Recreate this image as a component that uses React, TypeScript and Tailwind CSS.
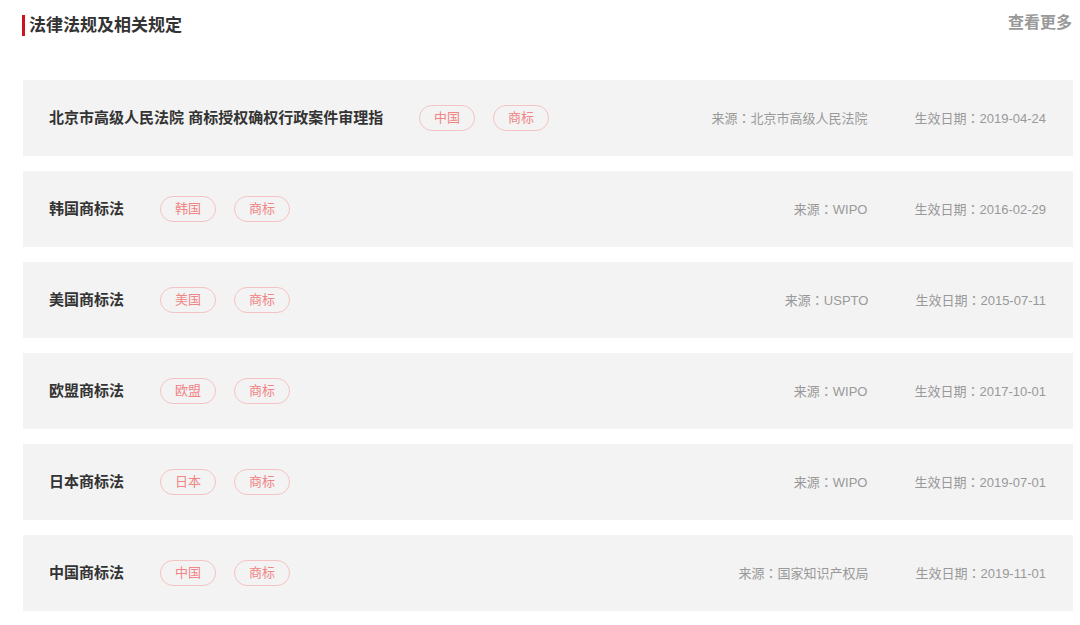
import React from "react";

const rows = [
  { title: "北京市高级人民法院 商标授权确权行政案件审理指", tags: ["中国", "商标"], source: "北京市高级人民法院", date: "2019-04-24", truncate: true },
  { title: "韩国商标法", tags: ["韩国", "商标"], source: "WIPO", date: "2016-02-29" },
  { title: "美国商标法", tags: ["美国", "商标"], source: "USPTO", date: "2015-07-11" },
  { title: "欧盟商标法", tags: ["欧盟", "商标"], source: "WIPO", date: "2017-10-01" },
  { title: "日本商标法", tags: ["日本", "商标"], source: "WIPO", date: "2019-07-01" },
  { title: "中国商标法", tags: ["中国", "商标"], source: "国家知识产权局", date: "2019-11-01" },
];

function Colon() {
  return <span className="font-['Noto_Sans_CJK_TC',sans-serif]">：</span>;
}

export default function App() {
  return (
    <div
      className="w-[1080px] h-[625px] bg-white overflow-hidden"
      style={{ fontFamily: '"Liberation Sans", "Noto Sans CJK SC", sans-serif' }}
    >
      <div className="flex items-center justify-between pl-[22px] pr-[8px] pt-[14px] h-[22px] box-content">
        <div className="flex items-center">
          <div className="w-[3px] h-[21px] bg-[#d0121b]" />
          <span className="ml-[4px] text-[17px] font-bold text-[#333] leading-none">法律法规及相关规定</span>
        </div>
        <span className="text-[16px] text-[#999] font-bold leading-none mt-[-4px]">查看更多</span>
      </div>
      <div className="flex flex-col gap-[15px] mt-[44px] ml-[23px] w-[1050px]">
        {rows.map((r, i) => (
          <div key={i} className="h-[76px] bg-[#f3f3f3] flex items-center pl-[26px] pr-[27px]">
            <span
              className={
                "text-[15px] font-bold text-[#333] whitespace-nowrap " +
                (r.truncate ? "w-[334px]" : "")
              }
            >
              {r.title}
            </span>
            <div className="flex gap-[18px] ml-[36px]">
              {r.tags.map((t, j) => (
                <span
                  key={j}
                  className="w-[56px] h-[26px] rounded-full border border-[#f5c3c3] text-[#f08585] text-[13px] flex items-center justify-center"
                >
                  {t}
                </span>
              ))}
            </div>
            <div className="flex-1" />
            <span className="text-[13px] text-[#999] whitespace-nowrap">
              来源<Colon />{r.source}
            </span>
            <span className="text-[13px] text-[#999] whitespace-nowrap ml-[47px]">
              生效日期<Colon />{r.date}
            </span>
          </div>
        ))}
      </div>
    </div>
  );
}
